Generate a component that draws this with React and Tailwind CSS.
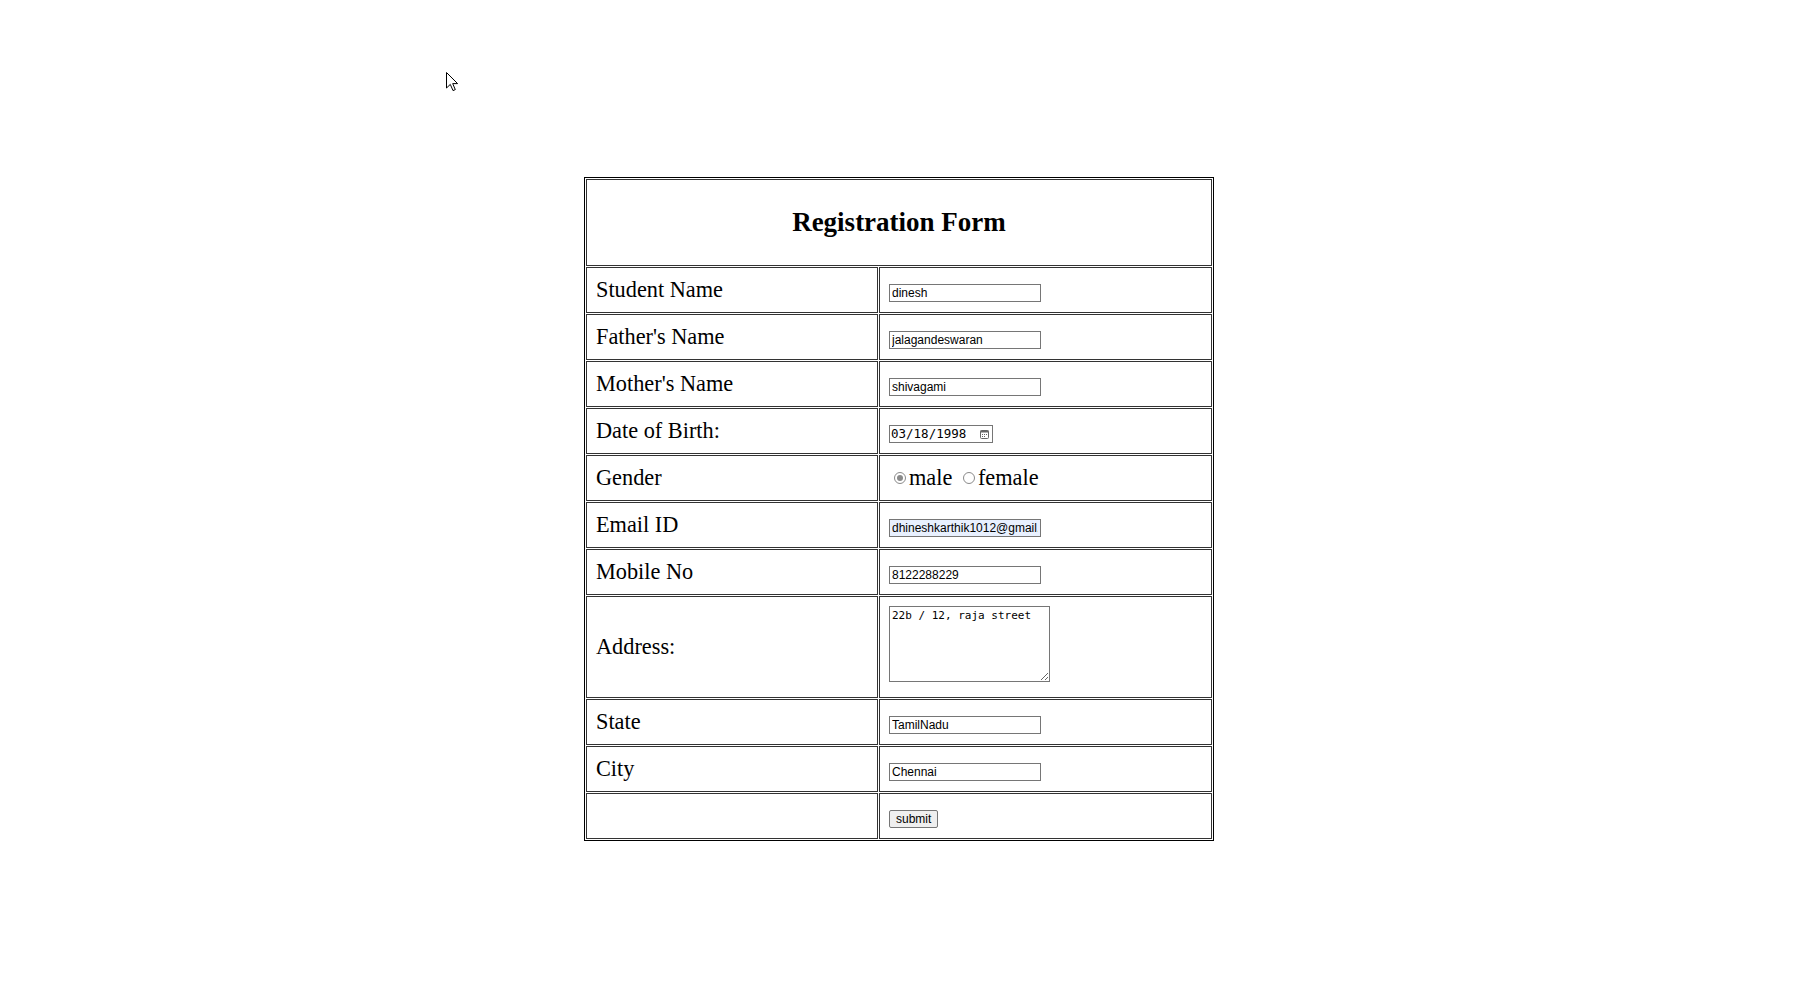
import React from "react";

const serif = { fontFamily: '"Liberation Serif", "Times New Roman", serif' };
const sans = { fontFamily: '"Liberation Sans", Arial, sans-serif' };
const mono = { fontFamily: '"DejaVu Sans Mono", "Liberation Mono", monospace' };

const textRows = [
  { label: "Student Name", value: "dinesh" },
  { label: "Father's Name", value: "jalagandeswaran" },
  { label: "Mother's Name", value: "shivagami" },
];

function Radio({ checked }) {
  return (
    <span className="inline-flex items-center justify-center w-[12px] h-[12px] rounded-full border border-[#8a8a8a] bg-white ml-[5px] mr-[3px] shrink-0">
      {checked && <span className="w-[6px] h-[6px] rounded-full bg-[#8a8a8a]" />}
    </span>
  );
}

function TextBox({ value, className = "" }) {
  return (
    <input
      type="text"
      defaultValue={value}
      style={sans}
      className={`block w-[152px] h-[18px] border border-[#767676] px-[2px] text-[12px] text-black outline-none ${className}`}
    />
  );
}

function Label({ children, tall }) {
  return (
    <div
      className={`${tall ? "h-[102px]" : "h-[46px]"} border border-[#333] flex items-center pl-[9px] text-[22.3px] text-black`}
      style={serif}
    >
      {children}
    </div>
  );
}

function Field({ children }) {
  return <div className="h-[46px] border border-[#333] pl-[9px] pt-[16px]">{children}</div>;
}

export default function App() {
  return (
    <div className="relative min-h-screen bg-white pt-[177px]">
      {/* mouse pointer from the screenshot */}
      <svg className="absolute left-[446px] top-[72px]" width="13" height="20" viewBox="0 0 13 20">
        <path d="M0.5 0.5 L0.5 16 L4.3 12.4 L7 18.6 L9.3 17.6 L6.7 11.6 L11.6 11.6 Z" fill="#fff" stroke="#000" strokeWidth="1" />
      </svg>

      <div className="ml-[584px] w-[630px] border border-black p-[1px] grid grid-cols-[292px_333px] gap-[1px]">
        {/* Title */}
        <div className="col-span-2 h-[87px] border border-[#333] flex items-center justify-center">
          <h2 className="text-[27px] font-bold text-black" style={serif}>
            Registration Form
          </h2>
        </div>

        {textRows.map((r) => (
          <React.Fragment key={r.label}>
            <Label>{r.label}</Label>
            <Field>
              <TextBox value={r.value} />
            </Field>
          </React.Fragment>
        ))}

        {/* Date of birth */}
        <Label>Date of Birth:</Label>
        <Field>
          <div className="flex items-center w-[104px] h-[18px] border border-[#767676] pl-[1px] pr-[2px] pt-[1px]">
            <span className="text-[12.5px] leading-none text-black" style={mono}>
              03/18/1998
            </span>
            <svg className="ml-auto mr-[1px]" width="9" height="9" viewBox="0 0 9 9">
              <rect x="0.5" y="0.5" width="8" height="8" rx="1" fill="none" stroke="#666" />
              <rect x="0.5" y="0.5" width="8" height="2" fill="#666" />
              <rect x="2" y="4" width="1" height="1" fill="#666" />
              <rect x="4" y="4" width="1" height="1" fill="#666" />
              <rect x="6" y="4" width="1" height="1" fill="#666" />
              <rect x="2" y="6" width="1" height="1" fill="#666" />
              <rect x="4" y="6" width="1" height="1" fill="#666" />
            </svg>
          </div>
        </Field>

        {/* Gender */}
        <Label>Gender</Label>
        <div className="h-[46px] border border-[#333] pl-[9px] flex items-center text-[22.3px] text-black" style={serif}>
          <Radio checked />
          <span>male</span>
          <span className="w-[5.6px]" />
          <Radio />
          <span>female</span>
        </div>

        <Label>Email ID</Label>
        <Field>
          <TextBox value="dhineshkarthik1012@gmail.com" className="bg-[#e8f0fe]" />
        </Field>

        <Label>Mobile No</Label>
        <Field>
          <TextBox value="8122288229" />
        </Field>

        {/* Address */}
        <Label tall>Address:</Label>
        <div className="h-[102px] border border-[#333] pl-[9px] pt-[9px]">
          <textarea
            defaultValue="22b / 12, raja street"
            style={mono}
            className="block w-[161px] h-[76px] border border-[#767676] px-[2px] py-[2px] text-[11px] leading-[13px] text-black outline-none resize"
          />
        </div>

        <Label>State</Label>
        <Field>
          <TextBox value="TamilNadu" />
        </Field>

        <Label>City</Label>
        <Field>
          <TextBox value="Chennai" />
        </Field>

        <div className="h-[46px] border border-[#333]" />
        <Field>
          <button
            type="button"
            style={sans}
            className="block h-[18px] px-[6px] bg-[#efefef] border border-[#767676] rounded-[2px] text-[12px] leading-none text-black"
          >
            submit
          </button>
        </Field>
      </div>
    </div>
  );
}
